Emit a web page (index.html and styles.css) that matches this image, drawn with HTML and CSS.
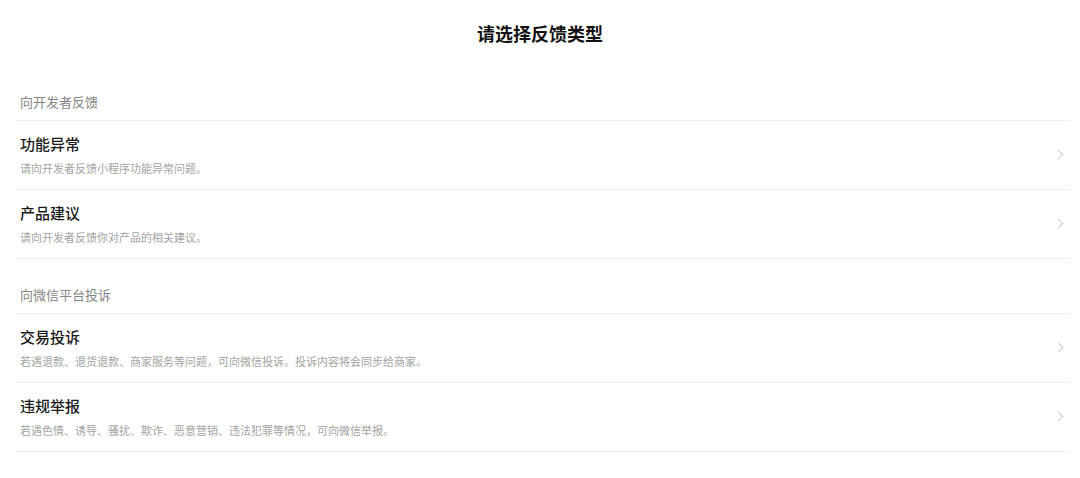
FILE: index.html
```html
<!DOCTYPE html>
<html lang="zh-CN">
<head>
	<meta charset="UTF-8">
	<title>请选择反馈类型</title>
	<link rel="stylesheet" href="styles.css">
</head>
<body>
	<div class="page">
		<h1 class="page-title">请选择反馈类型</h1>

		<div class="group">
			<div class="group-head">向开发者反馈</div>
			<ul class="cells">
				<li class="cell">
					<div class="cell-body">
						<div class="cell-title">功能异常</div>
						<div class="cell-desc">请向开发者反馈小程序功能异常问题。</div>
					</div>
					<span class="arrow"></span>
				</li>
				<li class="cell">
					<div class="cell-body">
						<div class="cell-title">产品建议</div>
						<div class="cell-desc">请向开发者反馈你对产品的相关建议。</div>
					</div>
					<span class="arrow"></span>
				</li>
			</ul>
		</div>

		<div class="group">
			<div class="group-head">向微信平台投诉</div>
			<ul class="cells">
				<li class="cell">
					<div class="cell-body">
						<div class="cell-title">交易投诉</div>
						<div class="cell-desc">若遇退款、退货退款、商家服务等问题，可向微信投诉。投诉内容将会同步给商家。</div>
					</div>
					<span class="arrow"></span>
				</li>
				<li class="cell">
					<div class="cell-body">
						<div class="cell-title">违规举报</div>
						<div class="cell-desc">若遇色情、诱导、骚扰、欺诈、恶意营销、违法犯罪等情况，可向微信举报。</div>
					</div>
					<span class="arrow"></span>
				</li>
			</ul>
		</div>
	</div>
</body>
</html>
```

FILE: styles.css
```css
body,ul,li,h1{ margin:0; padding:0;}
ul,li{ list-style:none;}
body{ background:#fff; font-family:"Noto Sans CJK SC", "Noto Sans", sans-serif; color:#111;}

.page{ padding:0 10px 0 16px;}
.page-title{ height:66px; line-height:66px; text-align:center; font-size:18px; font-weight:bold; color:#111; margin-left:-6px;}

.group-head{ padding:27px 4px 9px; font-size:13px; line-height:18px; color:#858585; border-bottom:1px solid #efefef;}

.cell{ display:flex; align-items:center; padding:12px 4px 13px; border-bottom:1px solid #efefef;}
.cell-body{ flex:1;}
.cell-title{ font-size:15px; line-height:21px; font-weight:500; color:#1a1a1a;}
.cell-desc{ margin-top:6px; font-size:11px; line-height:16px; color:#a3a3a3;}

.arrow{ width:6px; height:6px; border-top:1px solid #cdcdcd; border-right:1px solid #cdcdcd; transform:rotate(45deg); margin-right:4px;}
```
